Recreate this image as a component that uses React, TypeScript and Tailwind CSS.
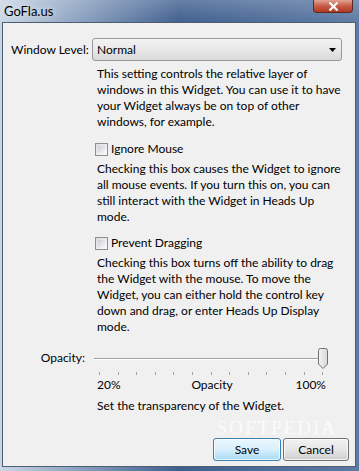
import React from 'react';

const font = { fontFamily: 'Lato, "Open Sans", sans-serif' };

function Checkbox({ label }: { label: string }) {
  return (
    <div className="flex items-center h-4 ml-[-2px]">
      <div className="w-[13px] h-[13px] border border-[#8e8f8f] bg-gradient-to-br from-[#dcdcdc] to-[#fbfbfb] p-[2px]">
        <div className="w-full h-full bg-gradient-to-br from-[#cbcfd5] to-[#f6f6f6]" />
      </div>
      <span className="ml-[3px]">{label}</span>
    </div>
  );
}

function Slider() {
  const ticks = Array.from({ length: 13 }, (_, i) => i);
  return (
    <div className="w-[240px]">
      <div className="relative h-[22px]">
        <div className="absolute left-0 right-[6px] top-[10px] h-[1px] bg-[#a0a0a0]" />
        <div className="absolute left-0 right-[6px] top-[11px] h-[1px] bg-white" />
        <svg className="absolute left-[223px] top-0" width="12" height="22" viewBox="0 0 12 22">
          <defs>
            <linearGradient id="thumb" x1="0" y1="0" x2="1" y2="0">
              <stop offset="0" stopColor="#f4f4f4" />
              <stop offset="1" stopColor="#d8d8d8" />
            </linearGradient>
          </defs>
          <path d="M1.5 2.5 Q1.5 0.5 3.5 0.5 H8.5 Q10.5 0.5 10.5 2.5 V16 L6 20.5 L1.5 16 Z" fill="url(#thumb)" stroke="#707070" />
        </svg>
      </div>
      <div className="relative h-[6px] mt-[2px]">
        {ticks.map((i) => (
          <div key={i} className="absolute top-0 w-[1px] h-[3px] bg-[#a0a0a0]" style={{ left: 5 + i * 18.6 }} />
        ))}
      </div>
    </div>
  );
}

export default function App() {
  return (
    <div
      className="w-[359px] h-[471px] relative overflow-hidden text-[12px] leading-4 text-black"
      style={font}
    >
      <div className="absolute inset-0 bg-gradient-to-r from-[#c9d6e5] via-[#3f5f8e] to-[#5d7aa3]" />
      <div className="absolute inset-x-0 top-0 h-[24px] bg-gradient-to-b from-white/20 to-transparent" />
      <div className="relative flex flex-col h-full">
        {/* title bar */}
        <div className="h-[22px] flex items-start justify-between">
          <span className="ml-[4px] mt-[3px] text-[13px] leading-4 text-black [text-shadow:0_0_6px_rgba(255,255,255,0.9)]">GoFla.us</span>
          <div className="mr-[6px] w-[40px] h-[13px] rounded-b-[4px] border border-t-0 border-[#5a2a22] bg-gradient-to-b from-[#e2a394] via-[#c75b46] to-[#b13a22] flex items-center justify-center">
            <svg width="11" height="9" viewBox="0 0 11 9">
              <path d="M1.5 0.5 L9.5 8.5 M9.5 0.5 L1.5 8.5" stroke="#fff" strokeWidth="2.2" />
            </svg>
          </div>
        </div>
        {/* client area */}
        <div className="flex-1 ml-[2px] mr-[3px] mb-[4px] border border-[#4f5d70] bg-[#f0f0f0] relative">
          <div className="pt-[15px] flex items-center">
            <span className="ml-[8px] w-[81px]">Window Level:</span>
            <div className="w-[250px] h-[23px] rounded-[3px] border border-[#9a9a9a] bg-gradient-to-b from-[#f3f3f3] via-[#e9e9e9] to-[#d8d8d8] flex items-center justify-between pl-[4px] pr-[5px]">
              <span>Normal</span>
              <svg width="7" height="4" viewBox="0 0 7 4">
                <path d="M0 0 H7 L3.5 4 Z" fill="#000" />
              </svg>
            </div>
          </div>
          <div className="ml-[94px] mr-[4px]">
            <p className="mt-[5px]">
              This setting controls the relative layer of<br />
              windows in this Widget. You can use it to have<br />
              your Widget always be on top of other<br />
              windows, for example.
            </p>
            <div className="mt-[11px]">
              <Checkbox label="Ignore Mouse" />
            </div>
            <p className="mt-[4px]">
              Checking this box causes the Widget to ignore<br />
              all mouse events. If you turn this on, you can<br />
              still interact with the Widget in Heads Up<br />
              mode.
            </p>
            <div className="mt-[10px]">
              <Checkbox label="Prevent Dragging" />
            </div>
            <p className="mt-[4px]">
              Checking this box turns off the ability to drag<br />
              the Widget with the mouse. To move the<br />
              Widget, you can either hold the control key<br />
              down and drag, or enter Heads Up Display<br />
              mode.
            </p>
          </div>
          <div className="mt-[13px] flex items-start">
            <span className="w-[83px] text-right mt-[2px] pr-[1px]">Opacity:</span>
            <div className="ml-[8px]">
              <Slider />
            </div>
          </div>
          <div className="ml-[94px] w-[229px] flex justify-between mt-[-1px]">
            <span>20%</span>
            <span className="ml-[8px]">Opacity</span>
            <span>100%</span>
          </div>
          <p className="ml-[94px] mt-[5px]">Set the transparency of the Widget.</p>
          <div className="absolute right-[6px] bottom-[5px] flex gap-[2px]">
            <button className="w-[68px] h-[23px] rounded-[3px] border border-[#3c7fb1] bg-gradient-to-b from-[#eaf6fd] via-[#d9f0fc] to-[#a7d9f5] shadow-[inset_0_0_0_1px_rgba(255,255,255,0.7)]">
              Save
            </button>
            <button className="w-[66px] h-[23px] rounded-[3px] border border-[#707070] bg-gradient-to-b from-[#f2f2f2] via-[#e6e6e6] to-[#cfcfcf] shadow-[inset_0_0_0_1px_rgba(255,255,255,0.7)]">
              Cancel
            </button>
          </div>
          <span
            className="absolute right-[18px] bottom-[31px] text-[19px] leading-[15px] tracking-[2px] text-white/75 pointer-events-none"
            style={{ fontFamily: '"Liberation Serif", serif' }}
          >
            SOFTPEDIA
          </span>
        </div>
      </div>
    </div>
  );
}
